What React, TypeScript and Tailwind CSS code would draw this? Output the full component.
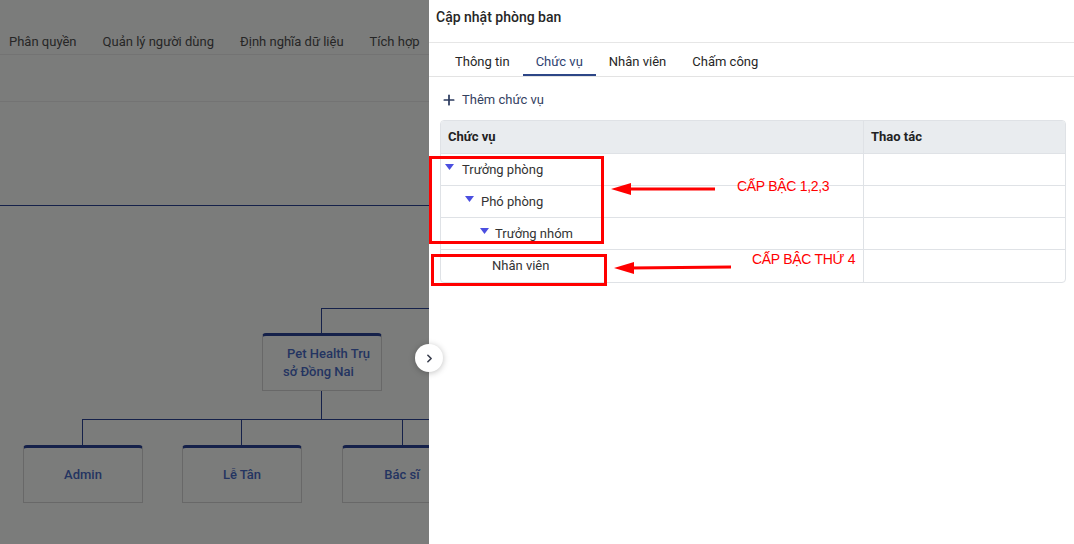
import { ChevronRight, Plus } from "lucide-react";

const navItems = ["Phân quyền", "Quản lý người dùng", "Định nghĩa dữ liệu", "Tích hợp"];
const tabs = ["Thông tin", "Chức vụ", "Nhân viên", "Chấm công"];

const positions = [
  { name: "Trưởng phòng", caretPad: "pl-[4px]", textPad: "pl-[21px]", caret: true },
  { name: "Phó phòng", caretPad: "pl-[24px]", textPad: "pl-[40px]", caret: true },
  { name: "Trưởng nhóm", caretPad: "pl-[39px]", textPad: "pl-[54px]", caret: true },
  { name: "Nhân viên", caretPad: "", textPad: "pl-[51px]", caret: false },
];

// nodes of the org chart, coordinates inside the chart canvas
const nodes = [
  { label: "Pet Health Trụ\nsở Đồng Nai", x: 262, y: 231, multi: true },
  { label: "Admin", x: 23, y: 343, multi: false },
  { label: "Lễ Tân", x: 182, y: 343, multi: false },
  { label: "Bác sĩ", x: 342, y: 343, multi: false },
];

const Caret = () => (
  <svg width="9" height="6" viewBox="0 0 9 6" className="mt-[-6px]">
    <path d="M0 0h9L4.5 6z" fill="#4b4fe0" />
  </svg>
);

const OrgChart = () => (
  <div className="relative flex-1">
    {/* connectors */}
    <div className="absolute left-0 top-[103px] w-full h-px bg-[#15214a]" />
    <div className="absolute left-[321px] top-[206px] right-0 h-px bg-[#15214a]" />
    <div className="absolute left-[321px] top-[206px] w-px h-[25px] bg-[#15214a]" />
    <div className="absolute left-[321px] top-[288px] w-px h-[29px] bg-[#15214a]" />
    <div className="absolute left-[82px] top-[317px] right-0 h-px bg-[#15214a]" />
    <div className="absolute left-[82px] top-[317px] w-px h-[26px] bg-[#15214a]" />
    <div className="absolute left-[241px] top-[317px] w-px h-[26px] bg-[#15214a]" />
    <div className="absolute left-[402px] top-[317px] w-px h-[26px] bg-[#15214a]" />

    {nodes.map((n) => (
      <div
        key={n.label}
        className={
          n.multi
            ? "absolute w-[120px] h-[58px] flex items-center pl-[20px] border border-[#686868] border-t-[3px] border-t-[#15214a] rounded-t-[4px]"
            : "absolute w-[120px] h-[58px] flex items-center justify-center border border-[#686868] border-t-[3px] border-t-[#15214a] rounded-t-[4px]"
        }
        style={{ left: n.x, top: n.y }}
      >
        <span
          className={
            n.multi
              ? "whitespace-pre-line indent-[4px] text-[13px] font-medium leading-[18px] text-[#243461]"
              : "text-[13px] font-medium leading-[18px] text-[#243461]"
          }
        >
          {n.label}
        </span>
      </div>
    ))}
  </div>
);

export default function App() {
  return (
    <div className="relative flex w-[1074px] h-[544px] overflow-hidden font-['Roboto',sans-serif]">
      {/* dimmed page behind the drawer */}
      <div className="w-[429px] shrink-0 flex flex-col bg-[#7b7c7b] overflow-hidden">
        <div className="h-[55px] shrink-0 flex items-end gap-[26px] pl-[9px] pb-[3px] border-b border-[#737373]">
          {navItems.map((item) => (
            <span key={item} className="text-[13px] text-[#262626] whitespace-nowrap">
              {item}
            </span>
          ))}
        </div>
        <div className="h-[47px] shrink-0 border-b border-[#737373]" />
        <OrgChart />
      </div>

      {/* drawer */}
      <div className="flex-1 flex flex-col bg-white">
        <div className="h-[43px] shrink-0 flex items-start pt-[7px] px-[7px] border-b border-[#e6e6e6]">
          <h1 className="text-[14px] leading-[20px] font-medium text-[#262626]">Cập nhật phòng ban</h1>
        </div>
        <div className="h-[34px] shrink-0 flex items-stretch px-[13px] border-b border-[#e3e3e3]">
          {tabs.map((t) => (
            <div
              key={t}
              className={
                t === "Chức vụ"
                  ? "px-[13px] pt-[7px] flex items-center text-[13px] text-[#2e4270] border-b-2 border-[#2d4687]"
                  : "px-[13px] pt-[7px] flex items-center text-[13px] text-[#262626] border-b-2 border-transparent"
              }
            >
              {t}
            </div>
          ))}
        </div>
        <div className="h-[43px] shrink-0 flex items-center gap-[5px] pl-[12px] pt-[2px]">
          <Plus className="w-[16px] h-[16px] text-[#2b3a5e]" strokeWidth={2.6} />
          <span className="text-[13px] text-[#34415f]">Thêm chức vụ</span>
        </div>

        <div className="ml-[11px] w-[626px] border border-[#dfe2e6] rounded-[4px] overflow-hidden">
          <div className="flex h-[33px] bg-[#e9ecef] border-b border-[#dfe2e6]">
            <div className="w-[422px] flex items-center pl-[7px] text-[13px] font-bold text-[#222]">Chức vụ</div>
            <div className="flex-1 flex items-center pl-[7px] border-l border-[#dfe2e6] text-[13px] font-bold text-[#222]">
              Thao tác
            </div>
          </div>
          {positions.map((p, i) => (
            <div
              key={p.name}
              className={i < positions.length - 1 ? "flex h-[32px] border-b border-[#dfe2e6]" : "flex h-[32px]"}
            >
              <div className="w-[422px] relative flex items-center">
                {p.caret && (
                  <div className={`absolute left-0 top-0 h-full flex items-center ${p.caretPad}`}>
                    <Caret />
                  </div>
                )}
                <span className={`${p.textPad} text-[13px] text-[#333]`}>{p.name}</span>
              </div>
              <div className="flex-1 border-l border-[#dfe2e6]" />
            </div>
          ))}
        </div>
      </div>

      {/* drawer toggle */}
      <button className="absolute left-[415px] top-[344px] w-[28px] h-[28px] rounded-full bg-white shadow-[0_1px_6px_rgba(0,0,0,0.25)] flex items-center justify-center">
        <ChevronRight className="w-[13px] h-[13px] text-[#3a3f4e]" strokeWidth={3} />
      </button>

      {/* red annotations */}
      <div className="absolute left-[429px] top-[156px] w-[175px] h-[88px] border-[3px] border-[#ff0000]" />
      <div className="absolute left-[431px] top-[254px] w-[176px] h-[32px] border-[3px] border-[#ff0000]" />
      <svg className="absolute left-[605px] top-[175px]" width="130" height="105" viewBox="0 0 130 105">
        <path d="M22 14H110" stroke="#ff0000" strokeWidth="3" />
        <path d="M6 14L26 8V20z" fill="#ff0000" />
        <path d="M25 93L126 92" stroke="#ff0000" strokeWidth="3" />
        <path d="M9 93L29 87V99z" fill="#ff0000" />
      </svg>
      <span className="absolute left-[737px] top-[176px] text-[14px] text-[#ff0000] font-['Liberation_Sans',sans-serif] tracking-[-0.3px]">
        CẤP BẬC 1,2,3
      </span>
      <span className="absolute left-[752px] top-[249px] text-[14px] text-[#ff0000] font-['Liberation_Sans',sans-serif] tracking-[-0.3px]">
        CẤP BẬC THỨ 4
      </span>
    </div>
  );
}
